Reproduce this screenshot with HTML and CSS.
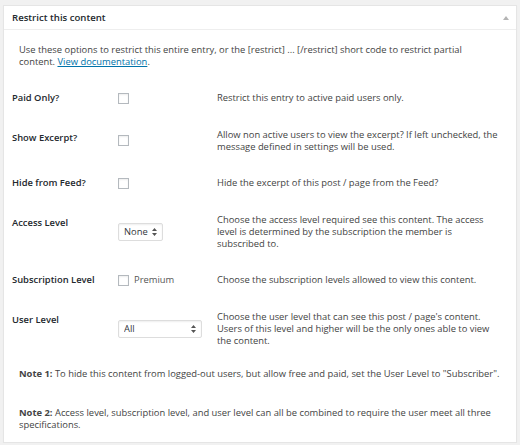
FILE: index.html
```html
<!DOCTYPE html>
<html lang="en">
<head>
    <meta charset="UTF-8">
    <title>Restrict this content</title>
    <link rel="stylesheet" href="styles.css">
</head>
<body>
    <div class="postbox">
        <div class="postbox-header">
            <h2>Restrict this content</h2>
            <span class="toggle">
                <svg width="6" height="4" viewBox="0 0 6 4"><path d="M0 4 L3 0 L6 4 Z" fill="#b4b4b4"/></svg>
            </span>
        </div>
        <div class="inside">
            <p class="intro">Use these options to restrict this entire entry, or the [restrict] ... [/restrict] short code to restrict partial content. <a href="#">View documentation</a>.</p>

            <div class="fields">
                <div class="field-row">
                    <div class="field-label">Paid Only?</div>
                    <div class="field-control"><input type="checkbox" class="cb"></div>
                    <div class="field-desc">Restrict this entry to active paid users only.</div>
                </div>

                <div class="field-row">
                    <div class="field-label">Show Excerpt?</div>
                    <div class="field-control"><input type="checkbox" class="cb"></div>
                    <div class="field-desc">Allow non active users to view the excerpt? If left unchecked, the message defined in settings will be used.</div>
                </div>

                <div class="field-row">
                    <div class="field-label">Hide from Feed?</div>
                    <div class="field-control"><input type="checkbox" class="cb"></div>
                    <div class="field-desc">Hide the excerpt of this post / page from the Feed?</div>
                </div>

                <div class="field-row">
                    <div class="field-label">Access Level</div>
                    <div class="field-control">
                        <span class="select-wrap small">
                            <select><option>None</option></select>
                            <svg class="arrows" width="5" height="8" viewBox="0 0 5 8"><path d="M0 3 L2.5 0 L5 3 Z M0 5 L2.5 8 L5 5 Z" fill="#555"/></svg>
                        </span>
                    </div>
                    <div class="field-desc">Choose the access level required see this content. The access level is determined by the subscription the member is subscribed to.</div>
                </div>

                <div class="field-row">
                    <div class="field-label">Subscription Level</div>
                    <div class="field-control"><label class="check-label"><input type="checkbox" class="cb"> Premium</label></div>
                    <div class="field-desc">Choose the subscription levels allowed to view this content.</div>
                </div>

                <div class="field-row">
                    <div class="field-label">User Level</div>
                    <div class="field-control">
                        <span class="select-wrap wide">
                            <select><option>All</option></select>
                            <svg class="arrows" width="5" height="8" viewBox="0 0 5 8"><path d="M0 3 L2.5 0 L5 3 Z M0 5 L2.5 8 L5 5 Z" fill="#555"/></svg>
                        </span>
                    </div>
                    <div class="field-desc">Choose the user level that can see this post / page's content. Users of this level and higher will be the only ones able to view the content.</div>
                </div>
            </div>

            <p class="note"><strong>Note 1:</strong> To hide this content from logged-out users, but allow free and paid, set the User Level to "Subscriber".</p>
            <p class="note"><strong>Note 2:</strong> Access level, subscription level, and user level can all be combined to require the user meet all three specifications.</p>
        </div>
    </div>
</body>
</html>
```

FILE: styles.css
```css
body {
    margin: 0;
    padding: 5px 3px 0;
    background: #f1f1f1;
    font-family: "Open Sans", "Liberation Sans", sans-serif;
    font-size: 9.4px;
    line-height: 12px;
    color: #444;
}
.postbox {
    background: #fff;
    border: 1px solid #e5e5e5;
    box-shadow: 0 1px 1px rgba(0, 0, 0, 0.04);
    height: 438px;
    box-sizing: border-box;
}
.postbox-header {
    display: flex;
    justify-content: space-between;
    align-items: center;
    height: 23px;
    padding: 0 8px;
    border-bottom: 1px solid #eee;
}
.postbox-header h2 {
    margin: 0;
    font-size: 9.6px;
    font-weight: 600;
    color: #23282d;
}
.toggle {
    display: flex;
    margin-right: -1px;
}
.inside {
    padding: 0 11px 0 8px;
}
.intro {
    margin: 14px 8px 0 7px;
}
.intro a {
    color: #0073aa;
}
.fields {
    margin-top: 10px;
}
.field-row {
    display: flex;
    align-items: center;
    padding: 10px 0;
}
.field-label {
    align-self: flex-start;
    width: 106px;
    flex-shrink: 0;
    margin: 4px 0;
    font-weight: 600;
    color: #23282d;
}
.field-control {
    width: 99px;
    flex-shrink: 0;
    display: flex;
    align-items: center;
}
.field-desc {
    flex: 1;
    padding: 0.5px 4px 0.5px 0;
}
.cb {
    appearance: none;
    margin: 0;
    width: 11px;
    height: 11px;
    border: 1px solid #b4b9be;
    background: #fff;
    box-shadow: inset 0 1px 2px rgba(0, 0, 0, 0.07);
    box-sizing: border-box;
}
.check-label {
    display: flex;
    align-items: center;
    gap: 5px;
    color: #555;
}
.select-wrap {
    position: relative;
    display: inline-block;
}
.select-wrap select {
    appearance: none;
    display: block;
    height: 18px;
    border: 1px solid #ddd;
    border-radius: 2px;
    box-shadow: inset 0 1px 2px rgba(0, 0, 0, 0.07);
    background: #fff;
    font-family: inherit;
    font-size: 9.4px;
    color: #32373c;
    padding: 0 0 0 5px;
    margin: 0;
}
.select-wrap.small select {
    width: 45px;
}
.select-wrap.wide select {
    width: 84px;
}
.select-wrap .arrows {
    position: absolute;
    right: 6px;
    top: 5px;
}
.note {
    margin: 11px 4px 0 7px;
}
.note + .note {
    margin-top: 27px;
}
```
